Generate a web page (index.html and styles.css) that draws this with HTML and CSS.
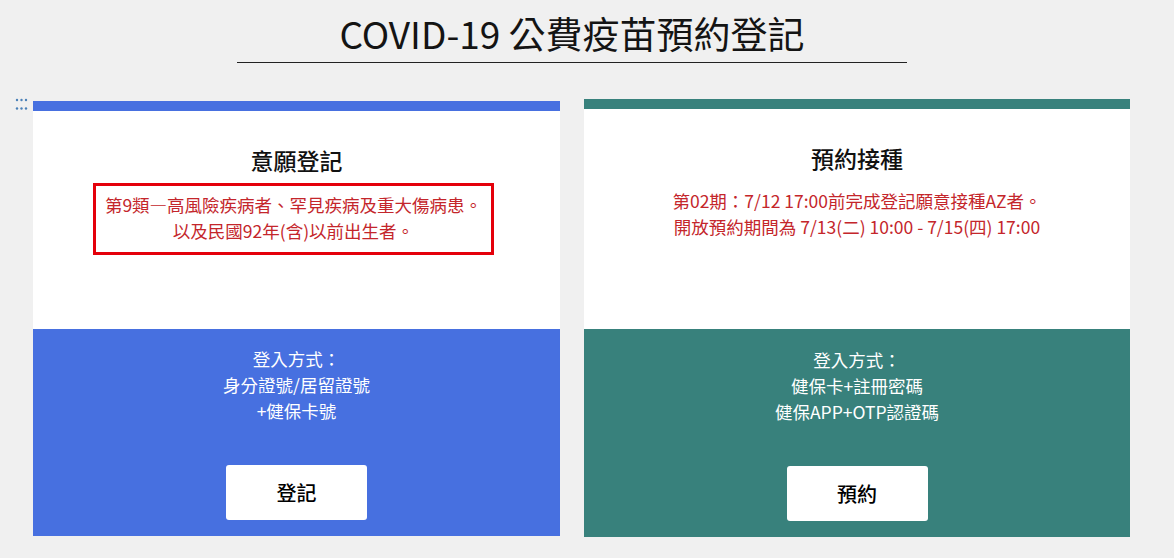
FILE: index.html
```html
<!DOCTYPE html>
<html lang="zh-Hant">
<head>
<meta charset="utf-8">
<title>COVID-19 公費疫苗預約登記</title>
<link rel="stylesheet" href="styles.css">
</head>
<body>
<svg class="handle" width="14" height="12" viewBox="0 0 14 12" aria-hidden="true">
  <circle cx="2" cy="2" r="1.2"/><circle cx="6.5" cy="2" r="1.2"/><circle cx="11" cy="2" r="1.2"/>
  <circle cx="2" cy="10.5" r="1.2"/><circle cx="6.5" cy="10.5" r="1.2"/><circle cx="11" cy="10.5" r="1.2"/>
</svg>
<header class="header">
  <h1 class="title">COVID-19 公費疫苗預約登記</h1>
</header>
<main class="cards">
  <section class="card card-blue">
    <div class="card-top">
      <h2 class="card-title">意願登記</h2>
      <p class="notice notice-boxed">第9類—高風險疾病者、罕見疾病及重大傷病患。<br>以及民國92年(含)以前出生者。</p>
    </div>
    <div class="card-bottom">
      <p class="login">登入方式：<br>身分證號/居留證號<br>+健保卡號</p>
      <button class="btn" type="button">登記</button>
    </div>
  </section>
  <section class="card card-teal">
    <div class="card-top">
      <h2 class="card-title">預約接種</h2>
      <p class="notice">第02期：7/12 17:00前完成登記願意接種AZ者。<br>開放預約期間為 7/13(二) 10:00 - 7/15(四) 17:00</p>
    </div>
    <div class="card-bottom">
      <p class="login">登入方式：<br>健保卡+註冊密碼<br>健保APP+OTP認證碼</p>
      <button class="btn" type="button">預約</button>
    </div>
  </section>
</main>
</body>
</html>
```
FILE: styles.css
```css
html, body {
  margin: 0;
  padding: 0;
}
body {
  background: #f0f0f0;
  font-family: "Noto Sans CJK TC", "Noto Sans", sans-serif;
  color: #111;
  width: 1174px;
  height: 558px;
  overflow: hidden;
}
.handle {
  position: absolute;
  left: 15px;
  top: 98px;
  fill: #4a80b8;
}
.header {
  width: 670px;
  margin-left: 237px;
  padding-top: 12px;
  padding-bottom: 7px;
  border-bottom: 1px solid #222;
}
.title {
  margin: 0;
  font-size: 37px;
  line-height: 43px;
  font-weight: 400;
  text-align: center;
  color: #141414;
  letter-spacing: 0;
}
.cards {
  display: flex;
  align-items: flex-start;
  gap: 24px;
  margin-left: 33px;
  margin-top: 36px;
}
.card {
  display: flex;
  flex-direction: column;
}
.card-blue {
  width: 527px;
  margin-top: 2px;
  border-top: 10px solid #4770e0;
}
.card-teal {
  width: 546px;
  border-top: 10px solid #38817c;
}
.card-top {
  background: #fff;
  display: flex;
  flex-direction: column;
  align-items: center;
  padding-top: 34px;
  height: 218px;
  box-sizing: border-box;
}
.card-teal .card-top {
  height: 220px;
  padding-top: 34px;
}
.card-title {
  margin: 0;
  font-size: 23px;
  line-height: 30px;
  font-weight: 500;
  color: #111;
}
.notice {
  margin: 8px 0 0;
  padding: 6px 9px 8px;
  border: 3px solid transparent;
  font-size: 17.5px;
  line-height: 26px;
  color: #c4262b;
  text-align: center;
}
.card-blue .notice {
  margin-left: -6px;
}
.card-teal .notice {
  margin-top: 6px;
}
.notice-boxed {
  border-color: #e4000a;
}
.card-bottom {
  display: flex;
  flex-direction: column;
  align-items: center;
  padding-top: 17px;
  height: 207px;
  box-sizing: border-box;
  color: #fff;
}
.card-blue .card-bottom {
  background: #4770e0;
}
.card-teal .card-bottom {
  background: #38817c;
  height: 208px;
  padding-top: 18px;
}
.login {
  margin: 0;
  font-size: 17.5px;
  line-height: 26px;
  text-align: center;
}
.btn {
  margin-top: 41px;
  width: 141px;
  height: 55px;
  border: none;
  border-radius: 3px;
  background: #fff;
  font-family: inherit;
  font-size: 20px;
  font-weight: 500;
  color: #000;
  cursor: pointer;
}
```
